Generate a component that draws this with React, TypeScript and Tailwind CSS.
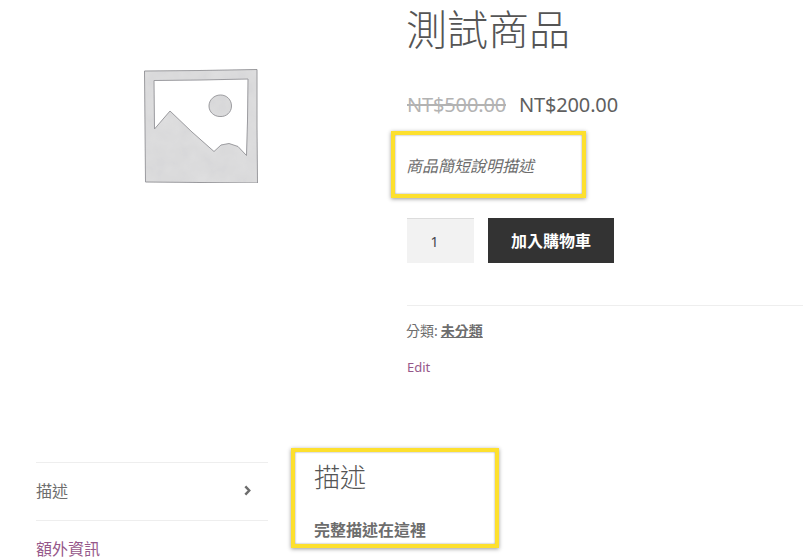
const sans = "font-['Noto_Sans','Noto_Sans_CJK_TC',sans-serif]";

// woocommerce style placeholder picture, sketchy frame with mountain and sun
function Placeholder() {
  return (
    <svg viewBox="0 0 140 140" className="h-[140px] w-[140px] shrink-0">
      <defs>
        <filter id="paper" x="0" y="0" width="100%" height="100%">
          <feTurbulence type="fractalNoise" baseFrequency="0.05" numOctaves="3" seed="4" />
          <feColorMatrix values="0 0 0 0 0.5  0 0 0 0 0.5  0 0 0 0 0.52  0 0 0 0.35 -0.08" />
          <feComposite in2="SourceGraphic" operator="in" />
          <feMerge>
            <feMergeNode in="SourceGraphic" />
            <feMergeNode />
          </feMerge>
        </filter>
      </defs>
      <g filter="url(#paper)" fill="#dededf" stroke="#8f8f93" strokeWidth="0.9" strokeLinejoin="round">
        <path
          fillRule="evenodd"
          d="M14.5 15 L70 14.5 L127 13.5 L127 70 L127.5 127 L70 126.5 L15.5 126 L15 70 Z M24 24.5 L70 24 L118 23 L117.5 65 L116.5 99.5 L108 90.5 L99 87.5 L91 89 L84 95.5 L62 76 L40 55 L24.5 73 Z"
        />
        <path d="M90.5 39 C97 39 101.5 44 101.5 50 C101.5 56.5 96 61 90 60.5 C84 60.5 79 56 79 50 C79 44 84 39 90.5 39 Z" />
      </g>
    </svg>
  );
}

// yellow annotation frame drawn over the page
function Marker({ className }: { className: string }) {
  return (
    <div
      className={`absolute border-4 border-[#fde02e] shadow-[0_1px_4px_rgba(0,0,0,0.4),inset_0_0_2px_rgba(0,0,0,0.45)] ${className}`}
    />
  );
}

export default function App() {
  return (
    <div className={`h-[560px] w-[803px] overflow-hidden bg-white text-[#6d6d6d] ${sans}`}>
      <div className="flex h-[462px]">
        <div className="flex w-[407px] shrink-0 justify-center pr-[8px] pt-[56px]">
          <Placeholder />
        </div>

        <div className="min-w-0 flex-1">
          <h1 className="ml-[-1px] pt-[4px] text-[41px] font-extralight leading-[50px] text-[#555]">測試商品</h1>

          <div className="mt-[37px] flex gap-[13px] text-[20px] leading-[28px] tracking-[-0.15px]">
            <del className="text-[#b3b3b3]">NT$500.00</del>
            <span className="text-[#5f5f5f]">NT$200.00</span>
          </div>

          <div className="relative mt-[12px] h-[67px]">
            <Marker className="left-[-16px] top-0 h-[67px] w-[195px]" />
            <p className="ml-[-1px] pt-[23px] text-[16px] italic leading-[24px] text-[#6d6d6d]">商品簡短說明描述</p>
          </div>

          <form className="mt-[20px] flex gap-[14px]">
            <div className="flex h-[45px] w-[67px] items-center justify-center border-t border-[#dcdcdc] bg-[#f2f2f2] pr-[12px] text-[14px] text-[#43454b]">
              1
            </div>
            <button type="button" className="h-[45px] w-[126px] bg-[#333] text-[16px] font-bold text-white">
              加入購物車
            </button>
          </form>

          <div className="mt-[42px] border-t border-[#eeeeee] pt-[15px]">
            <p className="ml-[-1px] text-[14px] leading-[20px]">
              分類:<a className="ml-[3px] font-bold underline">未分類</a>
            </p>
            <a className="mt-[16px] block text-[13px] leading-[20px] text-[#96588a]">Edit</a>
          </div>
        </div>
      </div>

      <div className="flex pl-[36px]">
        <ul className="w-[232px] shrink-0 text-[16px]">
          <li className="flex h-[58px] items-center justify-between border-t border-[#eeeeee] pb-[2px] pr-[17px]">
            <span>描述</span>
            <svg viewBox="0 0 8 12" className="h-[11px] w-[7px]" fill="none" stroke="#6d6d6d" strokeWidth="2.8">
              <path d="M1.5 1.2 L6 6 L1.5 10.8" />
            </svg>
          </li>
          <li className="flex h-[58px] items-center border-t border-[#eeeeee] pb-[2px] text-[#96588a]">額外資訊</li>
        </ul>

        <div className="relative ml-[46px] flex-1">
          <Marker className="left-[-23px] top-[-14px] h-[100px] w-[208px]" />
          <h2 className="text-[26px] font-extralight leading-[30px] text-[#555]">描述</h2>
          <p className="mt-[26px] text-[16px] font-bold leading-[24px]">完整描述在這裡</p>
        </div>
      </div>
    </div>
  );
}
